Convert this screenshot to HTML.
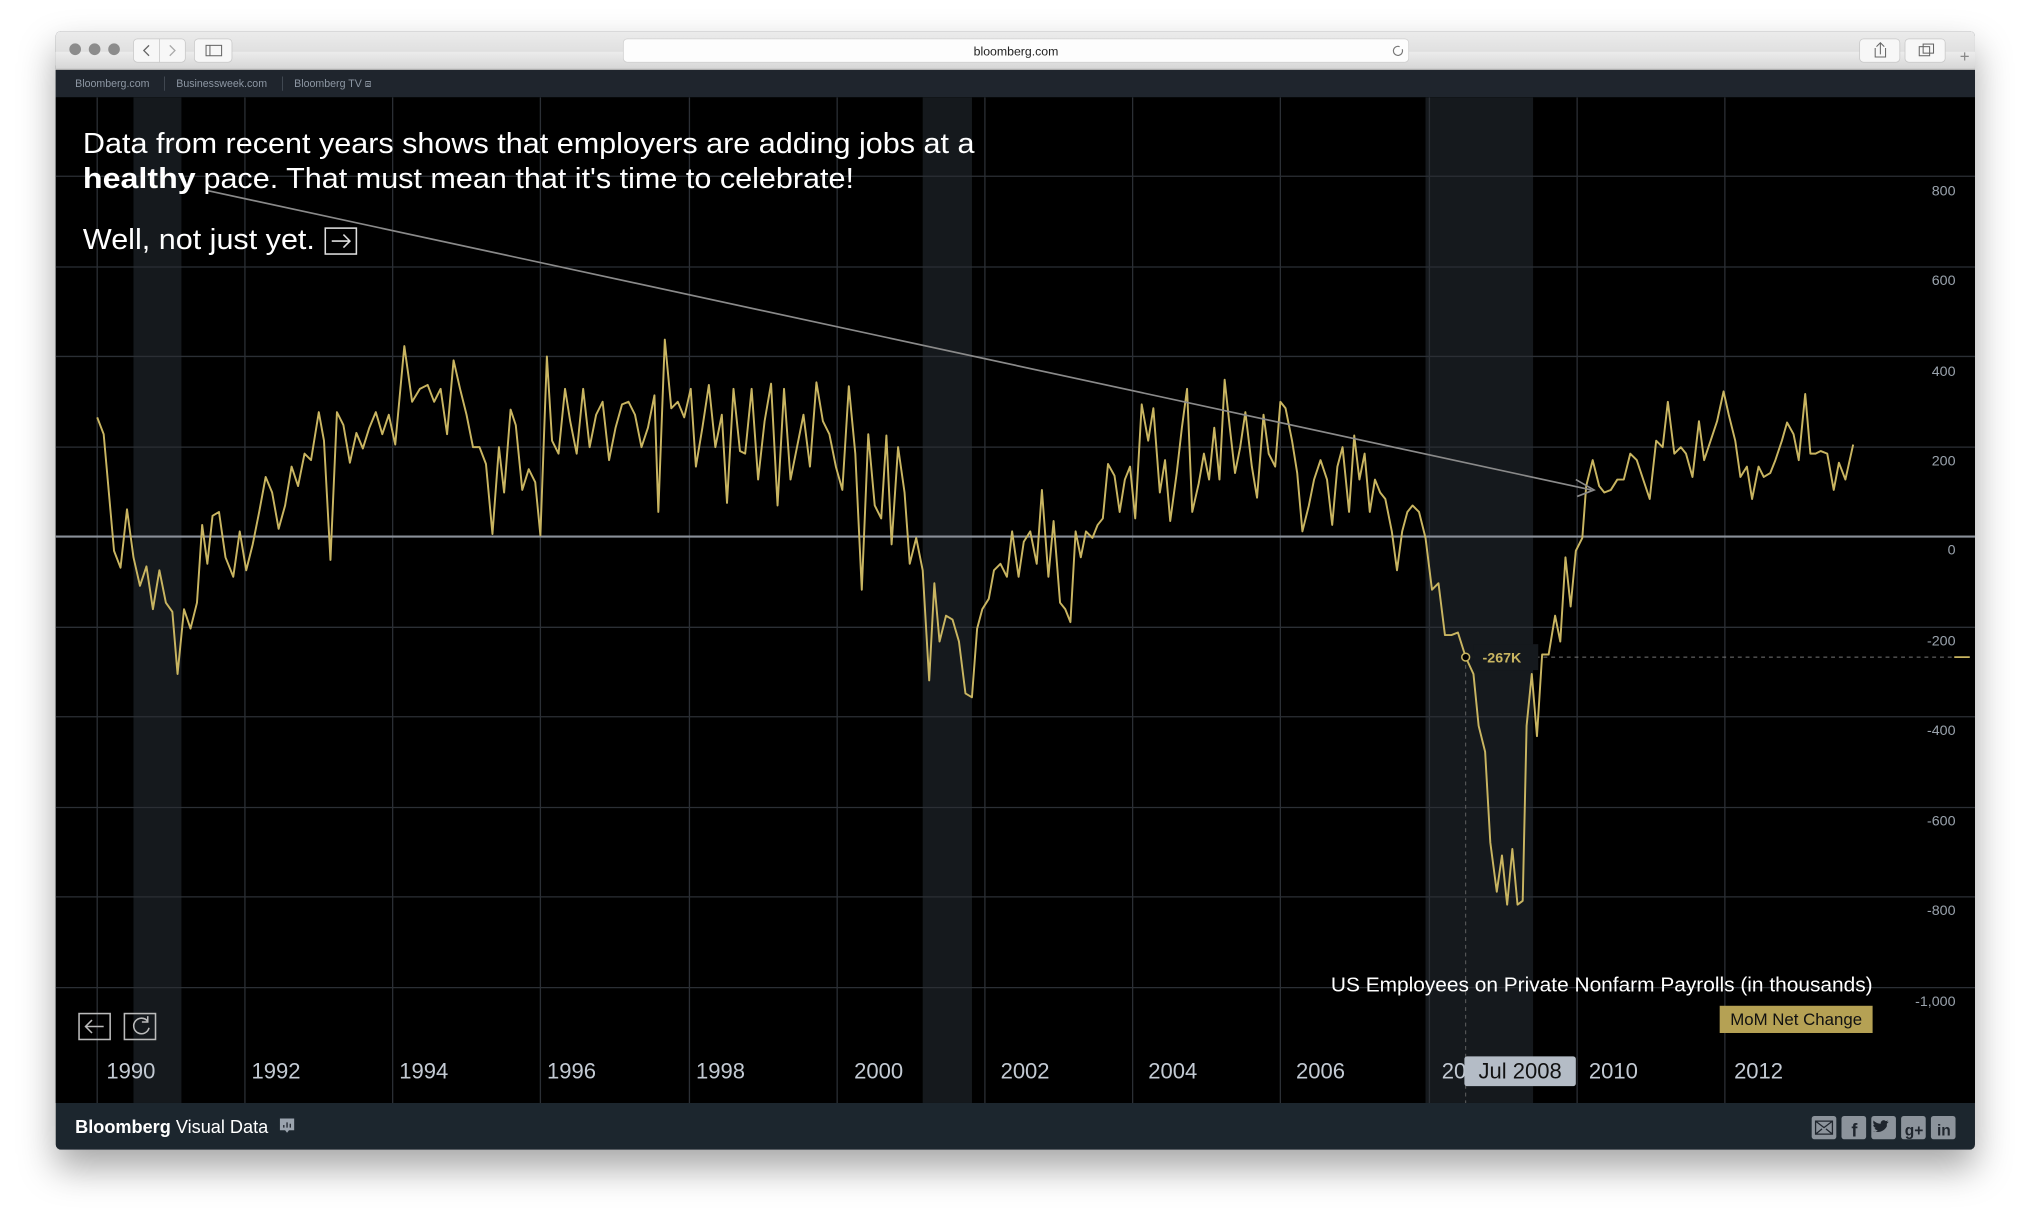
<!DOCTYPE html>
<html><head><meta charset="utf-8"><style>
html,body{margin:0;padding:0;background:#fff;width:2032px;height:1230px;overflow:hidden}
svg{display:block}
text{font-family:"Liberation Sans",sans-serif}
</style></head><body>
<svg width="2032" height="1230" viewBox="0 0 1568 949" preserveAspectRatio="none" xmlns="http://www.w3.org/2000/svg">
<defs>
<filter id="sh" x="-10%" y="-10%" width="120%" height="130%"><feDropShadow dx="0" dy="14" stdDeviation="14" flood-color="#000" flood-opacity="0.35"/></filter>
<linearGradient id="tb" x1="0" y1="0" x2="0" y2="1"><stop offset="0" stop-color="#ececec"/><stop offset="1" stop-color="#d5d5d5"/></linearGradient>
<clipPath id="cc"><rect x="43" y="75" width="1481" height="776"/></clipPath>
</defs>
<rect x="43" y="24" width="1481" height="863" rx="4" fill="#1f252d" filter="url(#sh)"/>
<rect x="43" y="24" width="1481" height="30" rx="4" fill="url(#tb)"/>
<rect x="43" y="40" width="1481" height="14" fill="url(#tb)"/>
<line x1="43" y1="53.5" x2="1524" y2="53.5" stroke="#b0b0b0"/>
<circle cx="58" cy="38" r="4.5" fill="#8c8c8c"/><circle cx="73" cy="38" r="4.5" fill="#8c8c8c"/><circle cx="88" cy="38" r="4.5" fill="#8c8c8c"/>
<rect x="103" y="30" width="40" height="18" rx="3" fill="#f7f7f7" stroke="#c8c8c8" stroke-width="0.6"/>
<line x1="123" y1="30" x2="123" y2="48" stroke="#c8c8c8" stroke-width="0.6"/>
<path d="M115 35 L111 39 L115 43" fill="none" stroke="#666" stroke-width="1"/>
<path d="M131 35 L135 39 L131 43" fill="none" stroke="#aaa" stroke-width="1"/>
<rect x="150" y="30" width="29" height="18" rx="3" fill="#f7f7f7" stroke="#c8c8c8" stroke-width="0.6"/>
<rect x="159" y="35" width="12" height="8" fill="none" stroke="#666" stroke-width="0.8"/><line x1="162" y1="35" x2="162" y2="43" stroke="#666" stroke-width="0.8"/>
<rect x="481" y="30" width="606" height="18" rx="3" fill="#fdfdfd" stroke="#cfcfcf" stroke-width="0.6"/>
<text x="784" y="43" font-size="9.5" text-anchor="middle" fill="#222">bloomberg.com</text>
<path d="M1080 36 a3.5 3.5 0 1 0 2 2" fill="none" stroke="#777" stroke-width="0.9"/>
<rect x="1435" y="30" width="31" height="18" rx="3" fill="#f7f7f7" stroke="#c8c8c8" stroke-width="0.6"/>
<rect x="1470" y="30" width="31" height="18" rx="3" fill="#f7f7f7" stroke="#c8c8c8" stroke-width="0.6"/>
<path d="M1447 37 v7 h8 v-7 M1451 42 v-9 M1448 36 l3-3 3 3" fill="none" stroke="#666" stroke-width="0.8"/>
<rect x="1481" y="36" width="8" height="7" fill="none" stroke="#666" stroke-width="0.8"/><rect x="1484" y="34" width="8" height="7" fill="none" stroke="#666" stroke-width="0.8"/>
<text x="1516" y="48" font-size="13" text-anchor="middle" fill="#888">+</text>
<rect x="43" y="54" width="1481" height="21" fill="#1f252d"/>
<text font-size="8.2" fill="#8d97a3"><tspan x="58" y="67">Bloomberg.com</tspan><tspan x="136" y="67">Businessweek.com</tspan><tspan x="227" y="67">Bloomberg TV ⧈</tspan></text>
<line x1="127" y1="59" x2="127" y2="70" stroke="#4a525c" stroke-width="0.6"/><line x1="218" y1="59" x2="218" y2="70" stroke="#4a525c" stroke-width="0.6"/>
<rect x="43" y="75" width="1481" height="776" fill="#000"/>
<g clip-path="url(#cc)">
<rect x="103" y="75" width="37" height="776" fill="#15191d"/>
<rect x="712" y="75" width="38" height="776" fill="#15191d"/>
<rect x="1100" y="75" width="83" height="776" fill="#15191d"/>
<g stroke="#2b2f35" stroke-width="1">
<line x1="75" y1="75" x2="75" y2="851"/><line x1="189" y1="75" x2="189" y2="851"/><line x1="303" y1="75" x2="303" y2="851"/><line x1="417" y1="75" x2="417" y2="851"/><line x1="532" y1="75" x2="532" y2="851"/><line x1="646" y1="75" x2="646" y2="851"/><line x1="760" y1="75" x2="760" y2="851"/><line x1="874" y1="75" x2="874" y2="851"/><line x1="988" y1="75" x2="988" y2="851"/><line x1="1103" y1="75" x2="1103" y2="851"/><line x1="1217" y1="75" x2="1217" y2="851"/><line x1="1331" y1="75" x2="1331" y2="851"/>
<line x1="43" y1="136" x2="1524" y2="136"/><line x1="43" y1="206" x2="1524" y2="206"/><line x1="43" y1="275" x2="1524" y2="275"/><line x1="43" y1="345" x2="1524" y2="345"/><line x1="43" y1="484" x2="1524" y2="484"/><line x1="43" y1="553" x2="1524" y2="553"/><line x1="43" y1="623" x2="1524" y2="623"/><line x1="43" y1="692" x2="1524" y2="692"/><line x1="43" y1="762" x2="1524" y2="762"/>
</g>
<line x1="43" y1="414" x2="1524" y2="414" stroke="#8a9099" stroke-width="1.6"/>
<g font-size="11" fill="#9aa3ad" text-anchor="end">
<text x="1509" y="151">800</text><text x="1509" y="220">600</text><text x="1509" y="290">400</text><text x="1509" y="359">200</text><text x="1509" y="428">0</text><text x="1509" y="498">-200</text><text x="1509" y="567">-400</text><text x="1509" y="637">-600</text><text x="1509" y="706">-800</text><text x="1509" y="776">-1,000</text>
</g>
<line x1="1131" y1="507" x2="1520" y2="507" stroke="#777" stroke-width="0.7" stroke-dasharray="3,3"/>
<line x1="1131" y1="507" x2="1131" y2="851" stroke="#666" stroke-width="0.7" stroke-dasharray="3,3"/>
<line x1="1508" y1="507" x2="1520" y2="507" stroke="#c9b561" stroke-width="1.3"/>
<polyline fill="none" stroke="#c9b561" stroke-width="1.5" stroke-linejoin="round" points="75,322 80,335 88,425 93,438 98,393 103,430 108,452 113,437 118,470 123,440 128,465 133,472 137,520 142,470 147,485 152,465 156,405 160,435 164,398 169,395 174,430 180,445 185,410 190,440 195,420 200,395 205,368 210,380 215,408 220,390 225,360 230,375 235,350 240,355 246,318 250,340 255,432 260,318 265,328 270,357 275,334 280,346 285,330 290,318 295,335 300,320 305,343 312,267 318,310 324,300 330,297 335,310 340,300 345,335 350,278 355,300 360,320 365,345 370,345 375,358 380,412 385,345 389,380 394,316 398,328 403,378 408,362 413,372 417,413 422,275 426,340 431,350 436,300 440,325 445,350 450,300 455,345 460,320 465,310 470,355 475,330 480,312 485,310 490,320 495,345 500,330 505,305 508,395 513,262 518,315 523,310 528,322 533,300 537,360 542,330 547,297 552,345 557,320 561,388 566,300 571,348 575,350 580,300 585,370 590,325 595,296 600,390 605,300 610,370 615,345 620,320 625,360 630,295 635,325 640,335 645,360 650,378 655,298 660,350 665,455 670,335 675,390 680,400 684,336 688,420 693,345 698,380 702,435 707,415 712,440 717,525 721,450 725,495 730,475 735,478 740,495 745,535 750,538 754,485 758,470 763,462 767,440 772,435 777,445 781,410 786,445 790,418 795,410 800,435 804,378 809,445 813,402 818,465 822,470 826,480 830,410 834,430 838,410 843,415 847,405 851,400 855,358 860,367 864,395 868,370 872,360 876,400 881,312 886,340 890,315 895,380 899,355 903,402 908,365 912,330 916,300 920,395 925,373 929,350 933,370 937,330 941,370 945,293 949,330 953,365 957,345 961,318 966,360 970,384 975,320 979,350 984,360 988,310 992,315 997,340 1001,365 1005,410 1010,390 1014,370 1019,355 1024,370 1028,405 1032,360 1036,345 1041,395 1045,336 1049,370 1053,350 1057,395 1061,370 1065,380 1069,385 1074,410 1078,440 1082,410 1086,395 1090,390 1095,395 1100,415 1105,455 1110,450 1115,490 1120,490 1125,488 1131,507 1137,520 1141,560 1146,580 1150,650 1155,688 1159,660 1163,698 1167,655 1171,698 1175,695 1178,560 1182,520 1186,568 1190,505 1195,505 1200,475 1204,495 1208,430 1212,468 1216,425 1221,415 1224,375 1229,355 1234,375 1238,380 1243,378 1248,370 1253,370 1258,350 1263,355 1268,370 1273,385 1278,340 1283,345 1287,310 1292,350 1297,345 1301,350 1306,368 1311,325 1315,355 1320,340 1325,325 1330,302 1334,320 1339,340 1343,368 1348,360 1352,385 1357,360 1361,368 1366,365 1370,355 1375,340 1379,326 1384,335 1388,355 1393,304 1397,350 1401,350 1405,348 1410,350 1415,378 1419,357 1424,370 1430,343"/>
<circle cx="1131" cy="507" r="3" fill="#000" stroke="#c9b561" stroke-width="1.2"/>
<rect x="1137" y="497" width="50" height="20" fill="#15191d"/>
<text x="1144" y="511" font-size="11" font-weight="bold" fill="#c9b561">-267K</text>
<line x1="160" y1="147" x2="1228" y2="378" stroke="#8a8a8a" stroke-width="1.3"/>
<path d="M1216 370 L1230 378 L1217 383" fill="none" stroke="#8a8a8a" stroke-width="1.3"/>
<g font-size="22" fill="#fff">
<text x="64" y="118" textLength="688" lengthAdjust="spacingAndGlyphs">Data from recent years shows that employers are adding jobs at a</text>
<text x="64" y="145" font-weight="bold" textLength="87" lengthAdjust="spacingAndGlyphs">healthy</text>
<text x="157" y="145" textLength="502" lengthAdjust="spacingAndGlyphs">pace. That must mean that it's time to celebrate!</text>
<text x="64" y="192" textLength="179" lengthAdjust="spacingAndGlyphs">Well, not just yet.</text>
</g>
<rect x="251" y="176" width="24" height="20" fill="none" stroke="#ddd" stroke-width="1.2"/>
<path d="M256 186 h14 M265 181 l5 5 -5 5" fill="none" stroke="#ddd" stroke-width="1.2"/>
<text x="1445" y="765" font-size="16" fill="#fff" text-anchor="end" textLength="418" lengthAdjust="spacingAndGlyphs">US Employees on Private Nonfarm Payrolls (in thousands)</text>
<rect x="1327" y="776" width="118" height="21" fill="#b5a154"/>
<text x="1386" y="791" font-size="13" fill="#111" text-anchor="middle">MoM Net Change</text>
<rect x="61" y="782" width="24" height="20" fill="none" stroke="#bbb" stroke-width="1.2"/>
<path d="M80 792 h-14 M71 787 l-5 5 5 5" fill="none" stroke="#bbb" stroke-width="1.2"/>
<rect x="96" y="782" width="24" height="20" fill="none" stroke="#bbb" stroke-width="1.2"/>
<path d="M114 788 a6 6 0 1 0 1 5 M114 784 v4.5 h-4.5" fill="none" stroke="#bbb" stroke-width="1.2"/>
<g font-size="17" fill="#c3cad3" text-anchor="middle">
<text x="101" y="832">1990</text><text x="213" y="832">1992</text><text x="327" y="832">1994</text><text x="441" y="832">1996</text><text x="556" y="832">1998</text><text x="678" y="832">2000</text><text x="791" y="832">2002</text><text x="905" y="832">2004</text><text x="1019" y="832">2006</text><text x="1122" y="832">20</text><text x="1245" y="832">2010</text><text x="1357" y="832">2012</text>
</g>
<rect x="1130" y="815" width="86" height="23" rx="2" fill="#b4bcc6"/>
<text x="1173" y="832" font-size="17" fill="#111" text-anchor="middle">Jul 2008</text>
</g>
<text x="58" y="874" font-size="14" fill="#fff"><tspan font-weight="bold">Bloomberg</tspan><tspan> Visual Data</tspan></text>
<path d="M216 863 h11 v9 h-4 l-1.5 2 -1.5-2 h-4z" fill="#9aa3ad"/>
<path d="M219 870 v-2 M221.5 870 v-4 M224 870 v-3" stroke="#1f252d" stroke-width="1"/>
<g fill="#8c939b">
<rect x="1398" y="861" width="19" height="18" rx="2"/><rect x="1421" y="861" width="19" height="18" rx="2"/><rect x="1444" y="861" width="19" height="18" rx="2"/><rect x="1467" y="861" width="19" height="18" rx="2"/><rect x="1490" y="861" width="19" height="18" rx="2"/>
</g>
<path d="M1401 865 h13 v10 h-13z M1401 865 l6.5 5 6.5-5 M1401 875 l5-4 M1414 875 l-5-4" fill="none" stroke="#1f252d" stroke-width="1"/>
<path d="M1447 873 c3 1 7 0 9-4 l0-2 1.5-1.5 -1.5 0.3 1-1.3 -1.8 0.5 c-1.5-1.5-4-0.5-4 2 c-2 0-4-1-5.5-2.5 c-0.5 1.5 0 3 1 3.5 l-1.2-0.2 c0 1.3 1 2.3 2.2 2.5 l-1.2 0.2 c0.5 1 1.5 1.6 2.5 1.6 c-1 1-2.5 1.3-4 1.1z" fill="#1f252d"/>
<g font-weight="bold" fill="#1f252d" text-anchor="middle">
<text x="1431" y="877" font-size="14">f</text><text x="1477" y="876" font-size="12">g+</text><text x="1500" y="876" font-size="12">in</text>
</g>
</svg>
</body></html>
